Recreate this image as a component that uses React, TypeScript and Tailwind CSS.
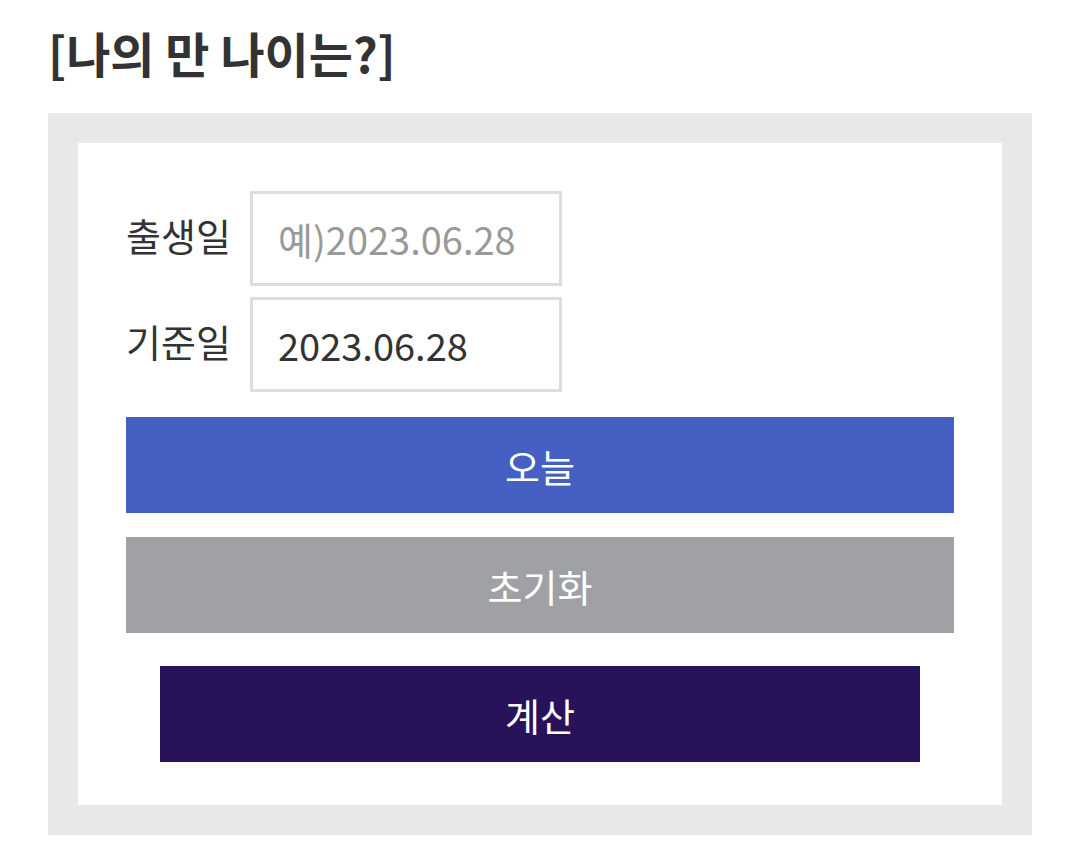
import React from "react";

export default function App() {
  const font = { fontFamily: '"Noto Sans CJK KR", "Noto Sans", sans-serif' };
  return (
    <div className="w-[1080px] h-[845px] bg-white" style={font}>
      <div className="pt-[22px] pl-[48px] pr-[48px]">
        <h1 className="text-[48px] leading-[60px] font-bold text-[#333333]">[나의 만 나이는?]</h1>
        <div className="mt-[31px] bg-[#e8e8e8] p-[30px]">
          <div className="bg-white pt-[48px] pb-[43px] px-[48px]">
            <div className="flex flex-col gap-[11px]">
              <div className="flex items-center">
                <div className="w-[124px] text-[38px] text-[#333333] leading-none -mt-[8px]">출생일</div>
                <input
                  placeholder="예)2023.06.28"
                  className="w-[312px] h-[95px] border-[3px] border-[#dddddd] px-[25px] text-[38px] text-[#333333] placeholder:text-[#999999] outline-none"
                  style={font}
                />
              </div>
              <div className="flex items-center">
                <div className="w-[124px] text-[38px] text-[#333333] leading-none -mt-[8px]">기준일</div>
                <input
                  defaultValue="2023.06.28"
                  className="w-[312px] h-[95px] border-[3px] border-[#dddddd] px-[25px] text-[38px] text-[#333333] outline-none"
                  style={font}
                />
              </div>
            </div>
            <button className="mt-[25px] w-full h-[96px] bg-[#4560c2] text-white text-[38px]" style={font}>오늘</button>
            <button className="mt-[24px] w-full h-[96px] bg-[#a0a1a5] text-white text-[38px]" style={font}>초기화</button>
            <div className="mt-[33px] flex justify-center">
              <button className="w-[760px] h-[96px] bg-[#28135a] text-white text-[38px]" style={font}>계산</button>
            </div>
          </div>
        </div>
      </div>
    </div>
  );
}
